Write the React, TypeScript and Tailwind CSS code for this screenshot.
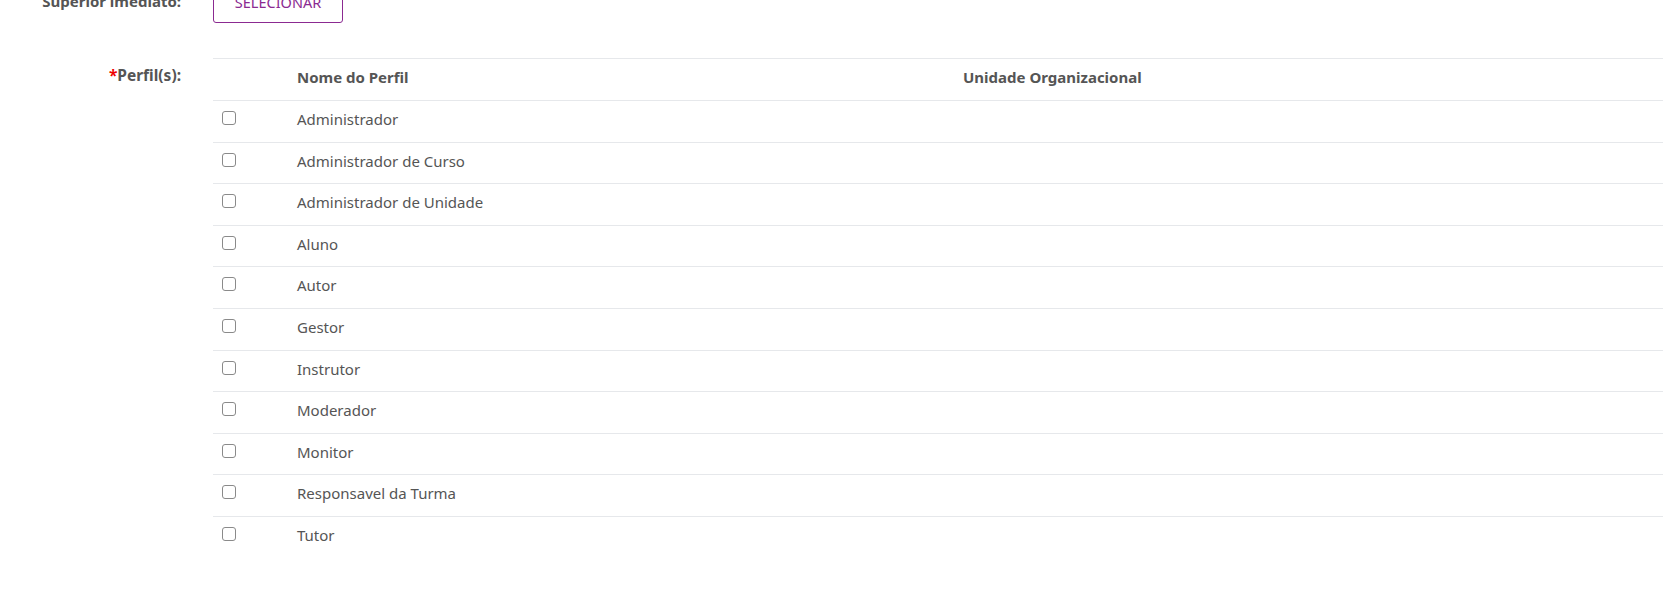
const perfis = [
  "Administrador",
  "Administrador de Curso",
  "Administrador de Unidade",
  "Aluno",
  "Autor",
  "Gestor",
  "Instrutor",
  "Moderador",
  "Monitor",
  "Responsavel da Turma",
  "Tutor",
];

const Checkbox = () => (
  <span className="mt-[10px] block h-[14px] w-[14px] rounded-[3px] border border-[#8a8a8a] bg-white" />
);

export default function App() {
  return (
    <div
      className="min-h-[593px] w-full overflow-hidden bg-white text-[15px] text-[#555]"
      style={{ fontFamily: '"Noto Sans", "Open Sans", sans-serif' }}
    >
      <div className="-mt-[15px] flex items-start">
        <div className="w-[181px] pt-[5px] text-right text-[15px] font-bold text-[#555]">
          Superior imediato:
        </div>
        <button className="ml-[32px] h-[38px] w-[130px] rounded-[3px] border border-[#8b2a91] pb-[2px] text-[14.5px] text-[#8b2a91]">
          SELECIONAR
        </button>
      </div>

      <div className="mt-[35px] flex items-start">
        <div className="w-[181px] pt-[6px] text-right text-[15.5px] font-bold text-[#555]">
          <span className="text-[#e00]">*</span>Perfil(s):
        </div>
        <div className="ml-[32px] flex-1 border-t border-[#e6e8eb]">
          <div className="flex h-[42px] items-center border-b border-[#e6e8eb] pb-[4px] font-bold">
            <div className="w-[84px]" />
            <div className="w-[666px]">Nome do Perfil</div>
            <div>Unidade Organizacional</div>
          </div>
          {perfis.map((p, i) => (
            <div
              key={p}
              className={
                "flex h-[41.6px] items-start " +
                (i < perfis.length - 1 ? "border-b border-[#e6e8eb]" : "")
              }
            >
              <div className="w-[84px] pl-[9px]">
                <Checkbox />
              </div>
              <div className="w-[666px] pt-[7px]">{p}</div>
              <div />
            </div>
          ))}
        </div>
      </div>
    </div>
  );
}
